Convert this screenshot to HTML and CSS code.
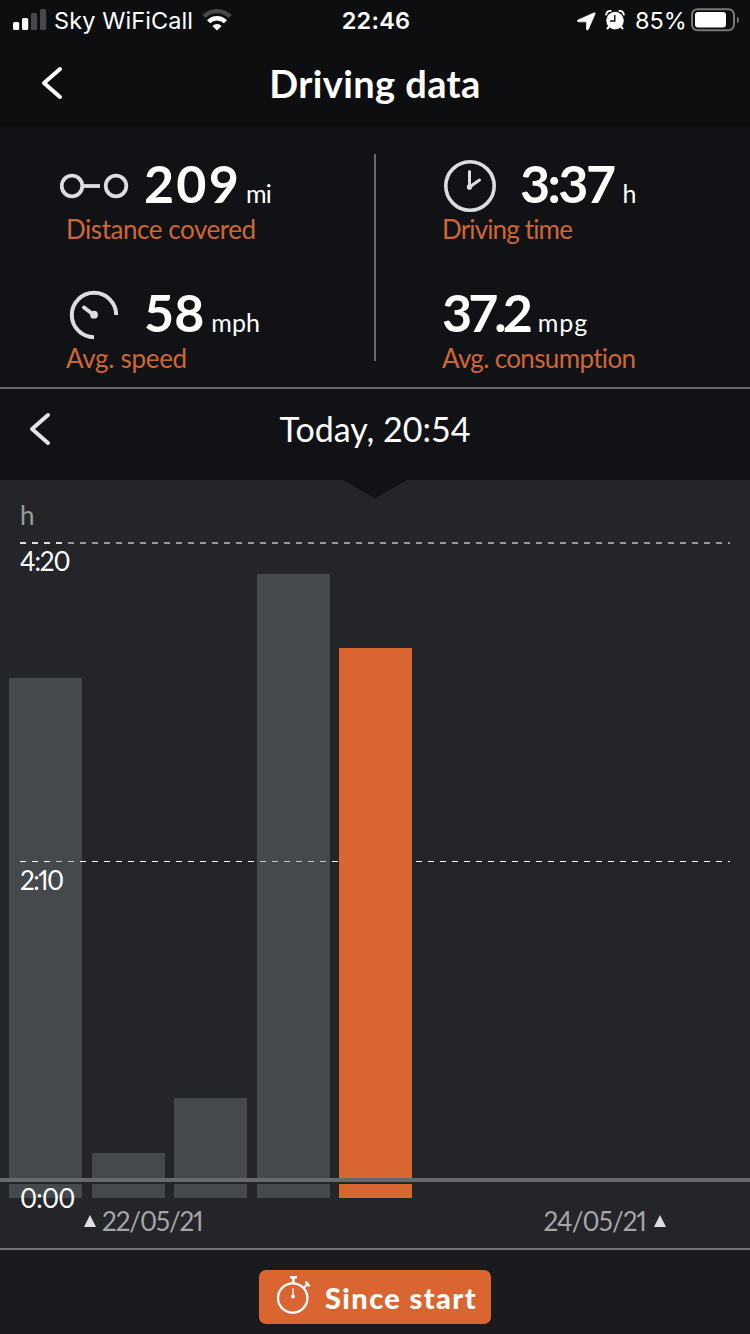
FILE: index.html
```html
<!DOCTYPE html>
<html lang="en">
<head>
<meta charset="utf-8">
<title>Driving data</title>
<link rel="stylesheet" href="styles.css">
</head>
<body>
<div class="screen">
  <div class="status">
    <div class="status-left">
      <svg class="signal" width="34" height="22" viewBox="0 0 34 22"><g fill="#fff"><rect x="0" y="13" width="6.2" height="8" rx="1.5"/><rect x="9" y="9" width="6.2" height="12" rx="1.5"/></g><g fill="#47484b"><rect x="18" y="4" width="6.2" height="17" rx="1.5"/><rect x="27" y="0" width="6.2" height="21" rx="1.5"/></g></svg>
      <span class="carrier">Sky WiFiCall</span>
      <svg class="wifi" width="30" height="24" viewBox="0 0 30 24"><path d="M1.800 8.600A18.500 18.500 0 0 1 28.200 8.600" fill="none" stroke="#47484b" stroke-width="4.300"/><path d="M6.600 13.800A11.600 11.600 0 0 1 23.400 13.800" fill="none" stroke="#fff" stroke-width="4.400"/><path d="M10.400 18A6.500 6.500 0 0 1 19.600 18L15 22.600Z" fill="#fff"/></svg>
    </div>
    <span class="clock">22:46</span>
    <div class="status-right">
      <svg class="location" width="19" height="19" viewBox="0 0 19 19"><path d="M17.200 .8c.8-.3 1.200.2.900 1L11.400 17.300c-.5 1.100-1.900 1-1.900-.2V9.800H1.400C.2 9.800 0 8.500 1 8Z" fill="#fff" stroke="#fff" stroke-width=".7"/></svg>
      <svg class="alarm" width="20" height="20" viewBox="0 0 20 20"><circle cx="10" cy="10.600" r="8.800" fill="#fff"/><path d="M1.300 5.400A4 4 0 0 1 6.400 1M18.700 5.400A4 4 0 0 0 13.600 1" fill="none" stroke="#fff" stroke-width="2"/><path d="M4.200 16.500L2 19M15.800 16.500L18 19" stroke="#fff" stroke-width="2"/><path d="M9.800 5V11H5" fill="none" stroke="#0d0e10" stroke-width="1.400"/></svg>
      <span class="percent">85%</span>
      <svg class="battery" width="48" height="24" viewBox="0 0 48 24"><rect x="1" y="1.200" width="42" height="21" rx="5.500" fill="none" stroke="#77787a" stroke-width="2"/><rect x="4" y="4" width="31" height="15.500" rx="3" fill="#fff"/><path d="M46 8.500q2 1 2 3.500t-2 3.500z" fill="#77787a"/></svg>
    </div>
  </div>

  <header class="header">
    <svg class="back" width="24" height="34" viewBox="0 0 24 34"><path d="M20 3L4 17L20 31" fill="none" stroke="#fff" stroke-width="4" stroke-linecap="round" stroke-linejoin="round"/></svg>
    <h1 class="title">Driving data</h1>
  </header>

  <section class="stats">
    <div class="column column-left">
      <div class="metric">
        <div class="reading">
          <svg class="icon" width="84" height="60" viewBox="60 153 84 60"><g fill="none" stroke="#dcdde0" stroke-width="3.800"><circle cx="72" cy="186" r="10.300"/><circle cx="116" cy="186" r="10.300"/><path d="M83 186H100"/></g></svg>
          <span class="value v-distance">209</span><span class="unit u-distance">mi</span>
        </div>
        <div class="label l-distance">Distance covered</div>
      </div>
      <div class="metric">
        <div class="reading">
          <svg class="icon" width="84" height="60" viewBox="60 282 84 60"><path d="M116.200 315A22.200 22.200 0 1 0 94 337.200" fill="none" stroke="#dcdde0" stroke-width="4"/><path d="M94 315L84 307.500" stroke="#dcdde0" stroke-width="4" stroke-linecap="round"/><circle cx="94" cy="314.700" r="3.900" fill="#dcdde0"/></svg>
          <span class="value v-speed">58</span><span class="unit u-speed">mph</span>
        </div>
        <div class="label l-speed">Avg. speed</div>
      </div>
    </div>
    <div class="divider"></div>
    <div class="column column-right">
      <div class="metric">
        <div class="reading">
          <svg class="icon" width="78" height="60" viewBox="442 153 78 60"><circle cx="470" cy="186" r="24.200" fill="none" stroke="#dcdde0" stroke-width="3.600"/><path d="M469.500 171.500V187L479.500 180" fill="none" stroke="#dcdde0" stroke-width="3" stroke-linecap="round"/><circle cx="469.500" cy="187" r="2.700" fill="#dcdde0"/></svg>
          <span class="value v-time">3:37</span><span class="unit u-time">h</span>
        </div>
        <div class="label l-time">Driving time</div>
      </div>
      <div class="metric">
        <div class="reading"><span class="value v-consumption">37.2</span><span class="unit u-consumption">mpg</span></div>
        <div class="label l-consumption">Avg. consumption</div>
      </div>
    </div>
  </section>

  <nav class="trip">
    <svg class="previous" width="24" height="34" viewBox="0 0 24 34"><path d="M20 3L4 17L20 31" fill="none" stroke="#e3e4e7" stroke-width="4" stroke-linecap="round" stroke-linejoin="round"/></svg>
    <span class="trip-date">Today, 20:54</span>
    <svg class="pointer" width="64" height="19" viewBox="0 0 64 19"><path d="M0 0H64L32 18.500Z" fill="#111215"/></svg>
  </nav>

  <section class="chart">
    <div class="plot">
      <div class="bar bar-1"></div>
      <div class="bar bar-2"></div>
      <div class="bar bar-3"></div>
      <div class="bar bar-4"></div>
      <div class="bar bar-5 selected"></div>
    </div>
    <svg class="gridlines" width="750" height="400" viewBox="0 480 750 400"><path d="M20 543H730" stroke="#97989b" stroke-width="2" stroke-dasharray="6 6"/><path d="M20 543H64" stroke="#dddee0" stroke-width="2" stroke-dasharray="6 6"/><path d="M20 861.500H339M416 861.500H730" stroke="#fff" stroke-width="1" stroke-dasharray="6 6"/><path d="M56 861.500H80M260 861.500H328" stroke="#c9cacc" stroke-width="1" stroke-dasharray="6 6"/></svg>
    <div class="axis"></div>
    <span class="tick tick-unit">h</span>
    <span class="tick tick-max">4:20</span>
    <span class="tick tick-mid">2:10</span>
    <span class="tick tick-zero">0:00</span>
    <div class="dates">
      <div class="date"><svg width="12" height="12" viewBox="0 0 12 12"><path d="M6 0L12 12H0Z" fill="#dfe0e2"/></svg><span class="date-text">22/05/21</span></div>
      <div class="date date-end"><span class="date-text">24/05/21</span><svg width="12" height="12" viewBox="0 0 12 12"><path d="M6 0L12 12H0Z" fill="#dfe0e2"/></svg></div>
    </div>
  </section>

  <footer class="footer">
    <div class="button">
      <svg class="stopwatch" width="36" height="42" viewBox="275 1275 36 42"><g fill="none" stroke="#fff"><circle cx="292.700" cy="1298" r="14.700" stroke-width="2.300"/><path d="M290 1277.200H297M293.300 1277V1283" stroke-width="2.500"/><path d="M303.500 1288L308 1283.500M305.500 1281.500L309.500 1286.200" stroke-width="2.400"/><path d="M293 1288V1296" stroke-width="1.300"/></g><circle cx="293" cy="1296.500" r="2" fill="#fff"/></svg>
      <span class="button-text">Since start</span>
    </div>
  </footer>
</div>
</body>
</html>
```
FILE: styles.css
```css
* { box-sizing: border-box; }
body { margin: 0; background: #111215; color: #fff; font-family: Lato, "Noto Sans", sans-serif; font-variant-ligatures: none; }
svg { display: block; flex: none; }
.screen { width: 750px; height: 1334px; overflow: hidden; display: flex; flex-direction: column; }

.status { height: 40px; background: #0d0e10; display: grid; grid-template-columns: 1fr auto 1fr; align-items: center; padding: 0 11px 0 13px; font: 400 23.5px/40px Inter, sans-serif; }
.status-left, .status-right { display: flex; align-items: center; }
.status-right { justify-content: flex-end; }
.signal { margin: 0 7px 2px 0; }
.carrier { letter-spacing: 0.1px; width: 140px; white-space: nowrap; padding-top: 1px; }
.wifi { margin: 0 0 1px 8px; }
.clock { font-weight: 600; letter-spacing: 0.2px; padding-top: 1px; }
.location { margin: 1px 9px 0 0; }
.alarm { margin: 0 10px 2px 0; }
.percent { width: 56px; padding-top: 1px; }
.battery { margin-bottom: 2px; }

.header { height: 87px; background: #0d0e10; display: grid; grid-template-columns: 85px 1fr 85px; align-items: center; padding-bottom: 2px; }
.back { margin-left: 40px; }
.title { margin: 0; text-align: center; font-size: 38px; line-height: 46px; font-weight: 700; letter-spacing: 0.4px; }

.stats { height: 262px; border-bottom: 2px solid #68696c; display: flex; padding-top: 26px; }
.column { display: flex; flex-direction: column; gap: 39px; }
.column-left { width: 374px; padding-left: 60px; }
.column-right { padding-left: 66px; }
.divider { width: 2px; height: 207px; margin-top: 1px; background: #68696c; }
.reading { height: 60px; display: flex; align-items: baseline; line-height: 60px; }
.icon { align-self: flex-start; }
.value { font-size: 52px; font-weight: 700; }
.v-distance { letter-spacing: 2.2px; }
.v-time { letter-spacing: -2.6px; }
.v-consumption { letter-spacing: -4px; }
.unit { font-size: 25px; margin-left: 8px; }
.u-distance { margin-left: 5px; letter-spacing: -0.8px; }
.u-speed { margin-left: 7px; }
.u-time { margin-left: 9px; }
.u-consumption { margin-left: 9px; letter-spacing: 0.9px; }
.label { font-size: 26px; line-height: 30px; padding-top: 1px; height: 30px; color: #cf6636; white-space: nowrap; }
.column-left .label { margin-left: 6px; }
.l-distance { letter-spacing: -0.45px; }
.l-speed { letter-spacing: -0.3px; }
.l-time { letter-spacing: -0.85px; }
.l-consumption { letter-spacing: -0.65px; }

.trip { position: relative; height: 91px; display: grid; grid-template-columns: 80px 1fr 80px; padding-top: 19px; align-items: start; }
.previous { margin: 4px 0 0 28px; }
.trip-date { text-align: center; font-size: 34px; line-height: 42px; }
.pointer { position: absolute; left: 343px; top: 91px; z-index: 1; }

.chart { position: relative; height: 770px; background: #242529; border-bottom: 2px solid #737477; }
.plot { height: 718px; display: flex; align-items: flex-end; padding-left: 9px; }
.bar { width: 73px; background: #45484c; }
.bar-1 { height: 520px; margin-right: 10px; }
.bar-2 { height: 45px; margin-right: 9px; }
.bar-3 { height: 100px; margin-right: 10px; }
.bar-4 { height: 624px; margin-right: 9px; }
.bar-5 { height: 550px; }
.selected { background: #d96631; }
.gridlines { position: absolute; left: 0; top: 0; }
.axis { position: absolute; left: 0; right: 0; top: 698px; height: 6px; background: #68696c; border-bottom: 2px solid #242529; }
.tick { position: absolute; left: 20px; font-size: 26px; line-height: 30px; font-feature-settings: "pnum"; }
.tick-unit { top: 20px; color: #9b9c9f; }
.tick-max { top: 66px; letter-spacing: -1.1px; }
.tick-mid { top: 385px; letter-spacing: -1.5px; }
.tick-zero { top: 703px; letter-spacing: -0.8px; }
.dates { display: flex; justify-content: space-between; padding: 8px 84px 0; }
.date { display: flex; align-items: center; gap: 6px; height: 30px; color: #a5a6a9; font-size: 26px; line-height: 30px; font-feature-settings: "pnum"; }
.date-text { letter-spacing: -1.1px; }
.date-end { gap: 8px; }
.date-end .date-text { letter-spacing: -0.9px; }

.footer { height: 84px; background: #1a1b1e; display: flex; justify-content: center; padding-top: 20px; }
.button { width: 232px; height: 54px; border-radius: 7px; background: #d96631; display: flex; align-items: center; padding-left: 16px; }
.stopwatch { margin-bottom: 2px; }
.button-text { margin-left: 14px; padding-top: 1px; font-size: 29px; line-height: 40px; font-weight: 900; letter-spacing: 1.4px; white-space: nowrap; }
```
